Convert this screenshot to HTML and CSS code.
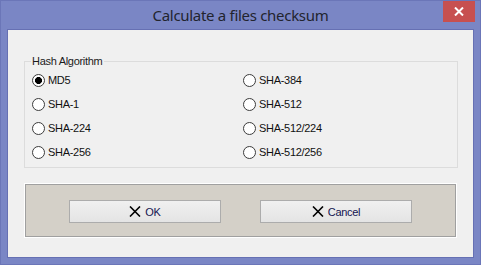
FILE: index.html
```html
<!DOCTYPE html>
<html>
<head>
<meta charset="utf-8">
<link rel="stylesheet" href="styles.css">
</head>
<body>
<div class="window">
  <div class="titlebar">
    <span class="title">Calculate a files checksum</span>
    <div class="close">
      <svg width="10" height="9" viewBox="0 0 10 9"><path d="M1 0.5 L9 8.5 M9 0.5 L1 8.5" stroke="#fff" stroke-width="2" fill="none"/></svg>
    </div>
  </div>
  <div class="client">
    <div class="group">
      <span class="legend">Hash Algorithm</span>
      <div class="options">
        <label class="opt"><span class="radio checked"></span><span>MD5</span></label>
        <label class="opt"><span class="radio"></span><span>SHA-1</span></label>
        <label class="opt"><span class="radio"></span><span>SHA-224</span></label>
        <label class="opt"><span class="radio"></span><span>SHA-256</span></label>
        <label class="opt"><span class="radio"></span><span>SHA-384</span></label>
        <label class="opt"><span class="radio"></span><span>SHA-512</span></label>
        <label class="opt"><span class="radio"></span><span>SHA-512/224</span></label>
        <label class="opt"><span class="radio"></span><span>SHA-512/256</span></label>
      </div>
    </div>
    <div class="panel">
      <button class="btn"><svg class="x" width="12" height="11" viewBox="0 0 12 11"><path d="M1 0.5 L11 10.5 M11 0.5 L1 10.5" stroke="#000" stroke-width="1.6" fill="none"/></svg><span>OK</span></button>
      <button class="btn"><svg class="x" width="12" height="11" viewBox="0 0 12 11"><path d="M1 0.5 L11 10.5 M11 0.5 L1 10.5" stroke="#000" stroke-width="1.6" fill="none"/></svg><span>Cancel</span></button>
    </div>
  </div>
</div>
</body>
</html>
```
FILE: styles.css
```css
* { box-sizing: border-box; }
html, body { margin: 0; padding: 0; }
body { width: 481px; height: 265px; overflow: hidden; }

.window {
  position: relative;
  width: 481px;
  height: 265px;
  background: #7a86c5;
  border: 1px solid #6b76b8;
  display: flex;
  flex-direction: column;
}

.titlebar {
  height: 28px;
  text-align: center;
  padding-top: 3px;
  line-height: 22px;
}
.title {
  font-family: "Noto Sans", "Open Sans", sans-serif;
  font-size: 15px;
  letter-spacing: -0.3px;
  color: #22242e;
}
.close {
  position: absolute;
  top: 0;
  right: 5px;
  width: 32px;
  height: 21px;
  background: #c75050;
  display: flex;
  align-items: center;
  justify-content: center;
}

.client {
  margin: 0 6px;
  height: 229px;
  background: #f0f0f0;
  border: 1px solid #6670b3;
  padding: 31px 0 0 16px;
  font-family: "Liberation Sans", Arial, sans-serif;
  font-size: 11px;
  letter-spacing: -0.3px;
  color: #000;
}

.group {
  position: relative;
  width: 434px;
  height: 107px;
  border: 1px solid #dcdcdc;
  padding: 6px 0 0 7px;
}
.legend {
  position: absolute;
  left: 6px;
  top: -8px;
  padding: 0 2px 0 1px;
  background: #f0f0f0;
  line-height: 14px;
  color: #1b1b1b;
}
.options {
  display: grid;
  grid-template-columns: 211px 1fr;
  grid-template-rows: repeat(4, 24px);
  grid-auto-flow: column;
}
.opt {
  display: flex;
  align-items: center;
  gap: 2px;
  color: #111;
}
.radio {
  width: 13px;
  height: 13px;
  border: 1px solid #3c3c3c;
  border-radius: 50%;
  background: #fff;
  flex: none;
  margin-right: 1px;
}
.radio.checked {
  background: radial-gradient(circle at center, #000 0, #000 3.2px, #fff 3.8px);
}

.panel {
  margin-top: 15px;
  width: 433px;
  height: 55px;
  background: #d4d0c8;
  border: 1px solid #fff;
  box-shadow: inset 0 0 0 1px #a0a0a0;
  padding: 16px 0 0 44px;
  display: flex;
  gap: 39px;
}
.btn {
  width: 152px;
  height: 23px;
  border: 1px solid #acacac;
  background: linear-gradient(#f0f0f0, #e4e4e4);
  display: flex;
  align-items: center;
  justify-content: center;
  gap: 4px;
  padding: 0;
  font-family: "Liberation Sans", Arial, sans-serif;
  font-size: 11px;
  letter-spacing: -0.3px;
  color: #141450;
}
.x { display: block; }
```
